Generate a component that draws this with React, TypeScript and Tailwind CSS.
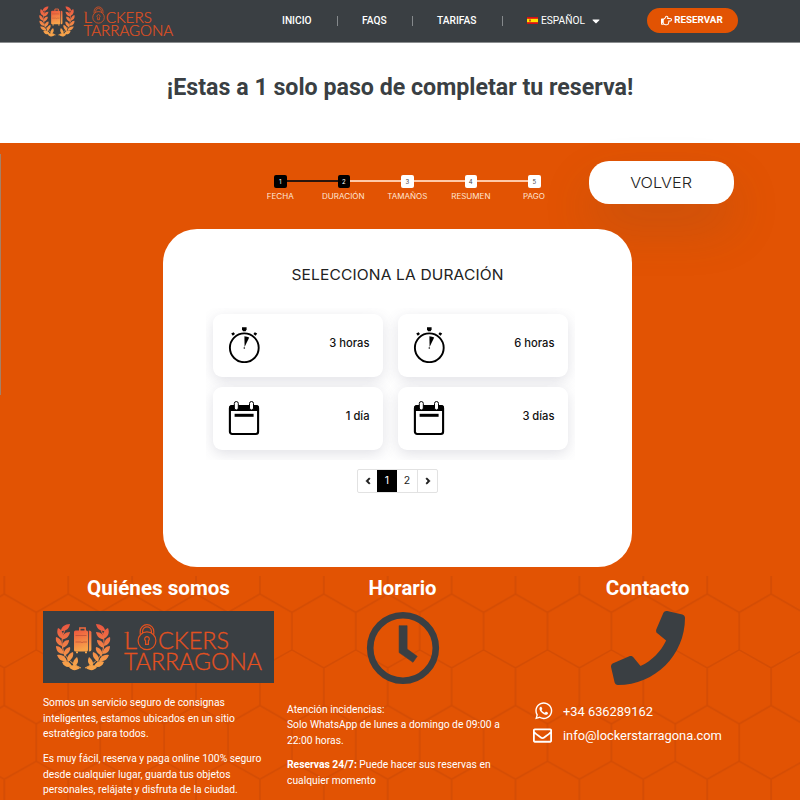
import React from "react";
import {
  FaAngleLeft,
  FaAngleRight,
  FaCaretDown,
  FaPhone,
  FaRegEnvelope,
  FaRegHandPointRight,
  FaWhatsapp,
} from "react-icons/fa";

function LaurelHalf() {
  return (
    <g fill="url(#laurel)">
      <path d="M9 4C3 14 1 34 24 44" fill="none" stroke="url(#laurel)" strokeWidth="1" />
      <path d="M13 0C8 0 4 3 4 7C9 7 12 5 13 0Z" />
      <path d="M1 4C-1 9 1 13 6 15C7 10 5 6 1 4Z" />
      <path d="M13 8C8 8 5 11 5 15.5C9 15 12 13 13 8Z" />
      <path d="M-1 13C-2 18 1 21 5 22C5 17 3 14 -1 13Z" />
      <path d="M12 16C7 16 5 19 5 24C9 23 12 20 12 16Z" />
      <path d="M-1 22C-1 27 2 30 7 30C6 25 3 22 -1 22Z" />
      <path d="M13 23C8 24 6 28 7 32C11 30 14 27 13 23Z" />
      <path d="M0 31C2 36 5 38 10 37C8 32 5 30 0 31Z" />
      <path d="M16 28C11 30 9 34 11 38C15 35 17 32 16 28Z" />
      <path d="M5 38C7 43 11 44 15 42C12 37 9 36 5 38Z" />
      <path d="M20 33C16 36 15 40 17 43C21 40 22 37 20 33Z" />
      <path d="M12 43C15 47 19 47 23 44C19 41 16 40 12 43Z" />
    </g>
  );
}

function Logo({ className }: { className: string }) {
  return (
    <svg className={className} viewBox="0 0 231 72" role="img" aria-label="Lockers Tarragona">
      <defs>
        <linearGradient id="flame" x1="0" y1="0" x2="0.25" y2="1">
          <stop offset="0" stopColor="#ee573e" />
          <stop offset="1" stopColor="#f7a34a" />
        </linearGradient>
        <linearGradient id="laurel" gradientUnits="userSpaceOnUse" x1="0" y1="0" x2="6" y2="42">
          <stop offset="0" stopColor="#ea5340" />
          <stop offset="1" stopColor="#f7a34a" />
        </linearGradient>
      </defs>
      <g transform="translate(14 13)"><LaurelHalf /></g>
      <g transform="translate(66 13) scale(-1 1)"><LaurelHalf /></g>
      <path d="M36.8 20v-3h5.4v3" fill="none" stroke="#f26a3e" strokeWidth="1.4" />
      <rect x="31" y="19.5" width="14" height="21" rx="1.5" fill="url(#flame)" />
      <path d="M45.8 19.5c2 0 2.6 1 2.6 2v17c0 1-.6 2-2.6 2z" fill="url(#flame)" />
      <path d="M32.5 24.5h11M32.5 31h5.5q1 1.4 2 0h4" fill="none" stroke="#b94c35" strokeWidth=".7" />
      <path d="M33 40.5h2v1.8h-2zM42 40.5h2v1.8h-2z" fill="#f7a34a" />
      <g fill="#e4511f" stroke="#e4511f" strokeWidth=".3" fontFamily="'Lato', 'Liberation Sans', sans-serif" fontWeight="300" fontSize="23.2">
        <text x="81" y="38" textLength="13" lengthAdjust="spacingAndGlyphs">L</text>
        <text x="115" y="38" textLength="71" lengthAdjust="spacingAndGlyphs">CKERS</text>
        <text x="81" y="59" textLength="138" lengthAdjust="spacingAndGlyphs">TARRAGONA</text>
      </g>
      <path d="M81.5 21.6h4" stroke="#e4511f" strokeWidth=".7" />
      <g fill="none" stroke="#e4511f" strokeWidth="1.2">
        <circle cx="104" cy="29.8" r="8.9" />
        <path d="M97.2 23.5v-3a6.8 6.8 0 0 1 13.6 0v3M99.6 22v-1.7a4.4 4.4 0 0 1 8.8 0V22" />
        <path d="M102.6 33.4v-3.6a2.3 2.3 0 1 1 2.8 0v3.6z" />
      </g>
    </svg>
  );
}

function Spain() {
  return (
    <svg className="h-[7px] w-[11px]" viewBox="0 0 11 7">
      <path fill="#d80f14" d="M0 0h11v7H0z" />
      <path fill="#ffe100" d="M0 1.8h11v3.4H0z" />
      <path fill="#b9571d" d="M2 2.4h2v2H2z" />
    </svg>
  );
}

function Stopwatch() {
  return (
    <svg className="h-9 w-8" viewBox="0 0 32 36">
      <circle cx="16.3" cy="20.8" r="14.4" fill="none" stroke="#000" strokeWidth="1.9" />
      <path d="M14 .3h4.6v2.3l-1 1.7H15l-1-1.7z" />
      <path d="M16.4 9.2q2.8.1 4.8 1.4L16.6 20z" />
      <circle cx="16.3" cy="21" r=".8" />
      <path d="M3.2 6.6l2.4-1.4L7 7.1 4.8 8.8zM29.2 6.6l-2.4-1.4-1.4 1.9 2.2 1.7z" />
    </svg>
  );
}

function Calendar() {
  return (
    <svg className="mt-[1px] h-[35px] w-8" viewBox="0 0 32 35">
      <rect x="1.9" y="5" width="28.2" height="28" rx="2.2" fill="#fff" stroke="#000" strokeWidth="2.1" />
      <path d="M1 10V7q0-3 3-3h24q3 0 3 3v3z" />
      <path d="M6.6 12.8h19v3h-19z" />
      <rect x="6.3" y=".5" width="4" height="8.5" rx="2" fill="#fff" stroke="#000" />
      <rect x="21.5" y=".5" width="4" height="8.5" rx="2" fill="#fff" stroke="#000" />
    </svg>
  );
}

function Clock() {
  return (
    <svg className="mx-auto mt-[10px] size-[74px]" viewBox="-37 -37 74 74">
      <circle r="32.8" fill="none" stroke="#3a3f43" strokeWidth="6.6" />
      <path d="M-3.9-22.3h8V1l10.1 7.3-4.2 6L-3.9 4.6z" fill="#3a3f43" stroke="#3a3f43" strokeWidth=".6" strokeLinejoin="round" />
    </svg>
  );
}

function Step({ n, label, done }: { n: number; label: string; done: boolean }) {
  return (
    <div className="relative flex w-[63.5px] flex-col items-center">
      <span className={`flex size-[12.5px] items-center justify-center rounded-[2px] text-[6px] ${done ? "bg-black text-white" : "bg-white text-[#444]"}`}>
        {n}
      </span>
      <span className="mt-[4px] scale-x-110 text-[7.3px] leading-[10px] whitespace-nowrap text-[#ffe6d5]">{label}</span>
    </div>
  );
}

function Option({ label, children }: { label: string; children: React.ReactNode }) {
  return (
    <button className="flex h-[63px] w-[170px] items-start justify-between rounded-[9px] bg-white pt-[13px] pr-[13px] pl-[15px] shadow-[0_4px_14px_rgba(75,80,105,0.17)]">
      {children}
      <span className="pt-[7px] text-[11.2px] leading-[18px] font-medium text-[#111]">{label}</span>
    </button>
  );
}

function Divider() {
  return <span className="h-[10px] w-px bg-[#85898c]" />;
}

export default function App() {
  return (
    <div className="flex h-[800px] w-[800px] flex-col overflow-hidden bg-white font-['Roboto',sans-serif]">
      <header className="flex h-[43px] shrink-0 overflow-hidden border-b border-[#8b8e90] bg-[#3a3f43] text-[10.2px] text-white">
        <Logo className="mt-[-2.3px] ml-[31px] h-[46.8px] w-[150px] shrink-0" />
        <nav className="ml-[101px] flex h-[41px] items-center font-medium">
          <span className="w-[55px]">INICIO</span>
          <Divider />
          <span className="w-[74px] pl-[24px]">FAQS</span>
          <Divider />
          <span className="w-[89px] pl-[24px]">TARIFAS</span>
          <Divider />
          <span className="ml-[24px] flex items-center gap-[3px] font-normal"><Spain />ESPAÑOL</span>
          <FaCaretDown className="ml-[5px] size-[12px]" />
        </nav>
        <button className="mt-[8px] ml-auto mr-[62.5px] flex h-[25px] w-[91px] items-center justify-center gap-[2px] rounded-full bg-[#e25303] text-[9.8px] font-bold">
          <FaRegHandPointRight className="size-[11px]" />RESERVAR
        </button>
      </header>

      <h1 className="h-[100px] shrink-0 pt-[29px] text-center text-[23.2px] leading-[30px] font-bold text-[#3a3f43]">
        ¡Estas a 1 solo paso de completar tu reserva!
      </h1>

      <main className="relative h-[432px] shrink-0 bg-[#e25303] font-['Inter',sans-serif]">
        <div className="absolute top-[11px] left-0 h-[241px] w-px bg-[#a58066]" />
        <div className="flex h-[86px] items-start">
          <div className="relative mt-[32px] ml-[248.5px] flex w-[317.5px]">
            <div className="absolute top-[5px] right-[32px] left-[31px] flex h-[2px]">
              <span className="w-1/4 bg-[#29150d]" />
              <span className="flex-1 bg-[#ffc9a8]" />
            </div>
            <Step n={1} label="FECHA" done />
            <Step n={2} label="DURACIÓN" done />
            <Step n={3} label="TAMAÑOS" done={false} />
            <Step n={4} label="RESUMEN" done={false} />
            <Step n={5} label="PAGO" done={false} />
          </div>
          <button className="mt-[18px] ml-[23px] h-[43px] w-[145px] rounded-[20px] bg-white pt-[2px] text-[14.8px] font-light text-[#222] shadow-[0_24px_50px_rgba(90,75,60,0.18)]">
            <span className="inline-block scale-x-110">VOLVER</span>
          </button>
        </div>

        <section className="relative ml-[163px] flex h-[338px] w-[469px] flex-col items-center rounded-[34px] bg-white">
          <h2 className="mt-[36px] scale-x-[1.11] text-[14px] leading-5 tracking-[0.13px] text-[#222]">SELECCIONA LA DURACIÓN</h2>
          <div className="mt-[23px] ml-[-15px] flex h-[152px] w-[369px] flex-wrap content-start gap-x-[15px] gap-y-[9.5px] overflow-hidden pt-[6px] pl-[7px]">
            <Option label="3 horas"><Stopwatch /></Option>
            <Option label="6 horas"><Stopwatch /></Option>
            <Option label="1 día"><Calendar /></Option>
            <Option label="3 días"><Calendar /></Option>
          </div>
          <div className="mt-[9px] flex h-[24px] w-[81px] overflow-hidden rounded-[2px] border border-[#e2e2e2] text-[10.5px] text-[#222]">
            <span className="flex w-[19px] items-center justify-center"><FaAngleLeft className="size-[10px] stroke-black stroke-[24]" /></span>
            <span className="-my-px flex w-[20px] items-center justify-center bg-black text-white">1</span>
            <span className="flex w-[21px] items-center justify-center border-r border-[#e2e2e2]">2</span>
            <span className="flex flex-1 items-center justify-center"><FaAngleRight className="size-[10px] stroke-black stroke-[24]" /></span>
          </div>
        </section>
      </main>

      <footer className="relative h-[225px] shrink-0 overflow-hidden bg-[#e25303] text-white">
        <svg className="absolute inset-0 h-full w-full" viewBox="0 0 800 225">
          <defs>
            <pattern id="hexes" x="4.3" y="-18.5" width="63.9" height="111.4" patternUnits="userSpaceOnUse">
              <path d="M0 0V37.5L32 56L63.9 37.5V0M32 56V93.4L0 111.4M32 93.4L63.9 111.4" fill="none" stroke="#d34c04" strokeWidth="1.6" />
            </pattern>
          </defs>
          <path fill="url(#hexes)" d="M0 1h800v224H0z" />
        </svg>
        <div className="relative flex text-[10.3px] leading-[15.5px]">
          <section className="ml-[43px] w-[231px]">
            <h3 className="text-center text-[20.6px] leading-[26px] font-bold">Quiénes somos</h3>
            <div className="mt-[10px] h-[72px] w-[231px] bg-[#3a3f43]"><Logo className="h-[72px] w-[231px]" /></div>
            <p className="mt-[12px] whitespace-nowrap">Somos un servicio seguro de consignas<br />inteligentes, estamos ubicados en un sitio<br />estratégico para todos.</p>
            <p className="mt-[9.5px] whitespace-nowrap">Es muy fácil, reserva y paga online 100% seguro<br />desde cualquier lugar, guarda tus objetos<br />personales, relájate y disfruta de la ciudad.</p>
          </section>
          <section className="ml-[13px] w-[231px]">
            <h3 className="text-center text-[20.3px] leading-[26px] font-bold">Horario</h3>
            <Clock />
            <p className="mt-[16.5px] whitespace-nowrap">Atención incidencias:<br />Solo WhatsApp de lunes a domingo de 09:00 a<br />22:00 horas.</p>
            <p className="mt-[9px] whitespace-nowrap"><b>Reservas 24/7:</b> Puede hacer sus reservas en<br />cualquier momento</p>
          </section>
          <section className="ml-[14px] w-[231px]">
            <h3 className="text-center text-[20.6px] leading-[26px] font-bold">Contacto</h3>
            <FaPhone className="mx-auto mt-[10px] size-[74px] text-[#3a3f43]" />
            <div className="mt-[16px] flex h-[20px] items-center text-[12.85px]"><FaWhatsapp className="ml-[1.5px] size-[19.5px]" /><span className="ml-[10px] pt-px">+34 636289162</span></div>
            <div className="mt-[4px] flex h-[20px] items-center text-[12.85px]"><FaRegEnvelope className="ml-px size-[19px]" /><span className="ml-[11px] pt-px">info@lockerstarragona.com</span></div>
          </section>
        </div>
      </footer>
    </div>
  );
}
